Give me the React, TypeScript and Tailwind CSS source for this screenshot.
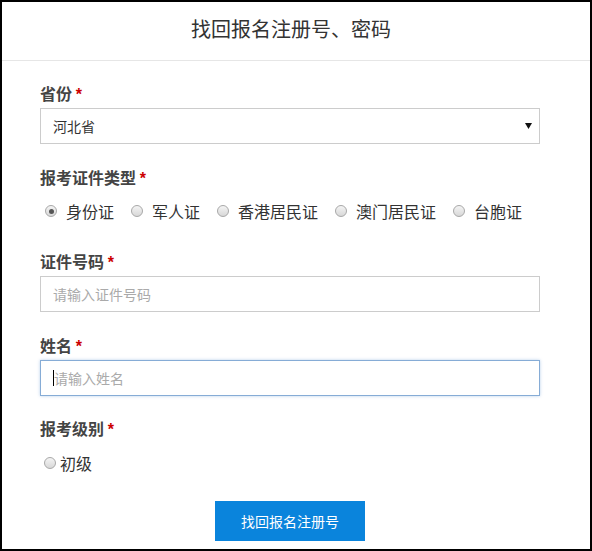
import { useState } from "react";

const FONT = "font-['Microsoft_YaHei','Noto_Sans_CJK_SC',sans-serif]";

const idTypes = ["身份证", "军人证", "香港居民证", "澳门居民证", "台胞证"];

function Radio({ checked }: { checked: boolean }) {
  return (
    <span className="flex h-3 w-3 shrink-0 items-center justify-center rounded-full border border-[#a8a8a8] bg-gradient-to-b from-[#f4f4f4] to-[#d8d8d8]">
      {checked && <span className="h-[5px] w-[5px] rounded-full bg-[#555]" />}
    </span>
  );
}

function Label({ text }: { text: string }) {
  return (
    <div className="mb-[5px] h-5 text-[16px] font-bold leading-5 text-[#444]">
      {text} <span className="font-['Liberation_Sans'] text-[#cc0000]">*</span>
    </div>
  );
}

export default function App() {
  const [idType, setIdType] = useState(0);
  const [level, setLevel] = useState(false);

  return (
    <div className={`${FONT} h-[551px] w-[592px] border-2 border-black bg-white`}>
      {/* 标题 */}
      <div className="h-[59px] border-b border-[#e6e6e6] pr-[10px] pt-[15px] text-center text-[20px] leading-6 text-[#333]">
        找回报名注册号、密码
      </div>

      <div className="w-[500px] pl-[38px] pt-[22px] box-content">
        {/* 省份 */}
        <Label text="省份" />
        <div className="flex h-9 w-[500px] items-center justify-between border border-[#ccc] pl-3 pr-[7px] text-[14px] text-[#333]">
          <span>河北省</span>
          <svg width="7" height="6" viewBox="0 0 7 6">
            <path d="M0 0H7L3.5 6Z" fill="#111" />
          </svg>
        </div>

        {/* 证件类型 */}
        <div className="mt-[23px]">
          <Label text="报考证件类型" />
        </div>
        <div className="mt-[14px] flex h-5 items-center pl-[5px] text-[16px] text-[#333]">
          {idTypes.map((t, i) => (
            <label
              key={t}
              onClick={() => setIdType(i)}
              className="mr-[17px] flex cursor-pointer items-center"
            >
              <Radio checked={idType === i} />
              <span className="ml-[9px] leading-5">{t}</span>
            </label>
          ))}
        </div>

        {/* 证件号码 */}
        <div className="mt-[30px]">
          <Label text="证件号码" />
        </div>
        <input
          className="h-9 w-[500px] border border-[#ccc] px-3 text-[14px] text-[#333] outline-none placeholder:text-[#aaa]"
          placeholder="请输入证件号码"
        />

        {/* 姓名 */}
        <div className="mt-[23px]">
          <Label text="姓名" />
        </div>
        <div className="flex h-9 w-[500px] items-center border border-[#86acd6] pl-3 shadow-[0_0_3px_rgba(102,150,210,0.45)]">
          <span className="h-4 w-px bg-black" />
          <input
            className="flex-1 bg-transparent text-[14px] text-[#333] outline-none placeholder:text-[#aaa]"
            placeholder="请输入姓名"
          />
        </div>

        {/* 报考级别 */}
        <div className="mt-[22px]">
          <Label text="报考级别" />
        </div>
        <label
          onClick={() => setLevel(!level)}
          className="mt-[15px] flex h-5 cursor-pointer items-center pl-1 text-[16px] text-[#333]"
        >
          <Radio checked={level} />
          <span className="ml-1 leading-5">初级</span>
        </label>

        <button className="mx-auto mt-[28px] block h-10 w-[150px] bg-[#0a84dc] text-[14px] text-white">
          找回报名注册号
        </button>
      </div>
    </div>
  );
}
